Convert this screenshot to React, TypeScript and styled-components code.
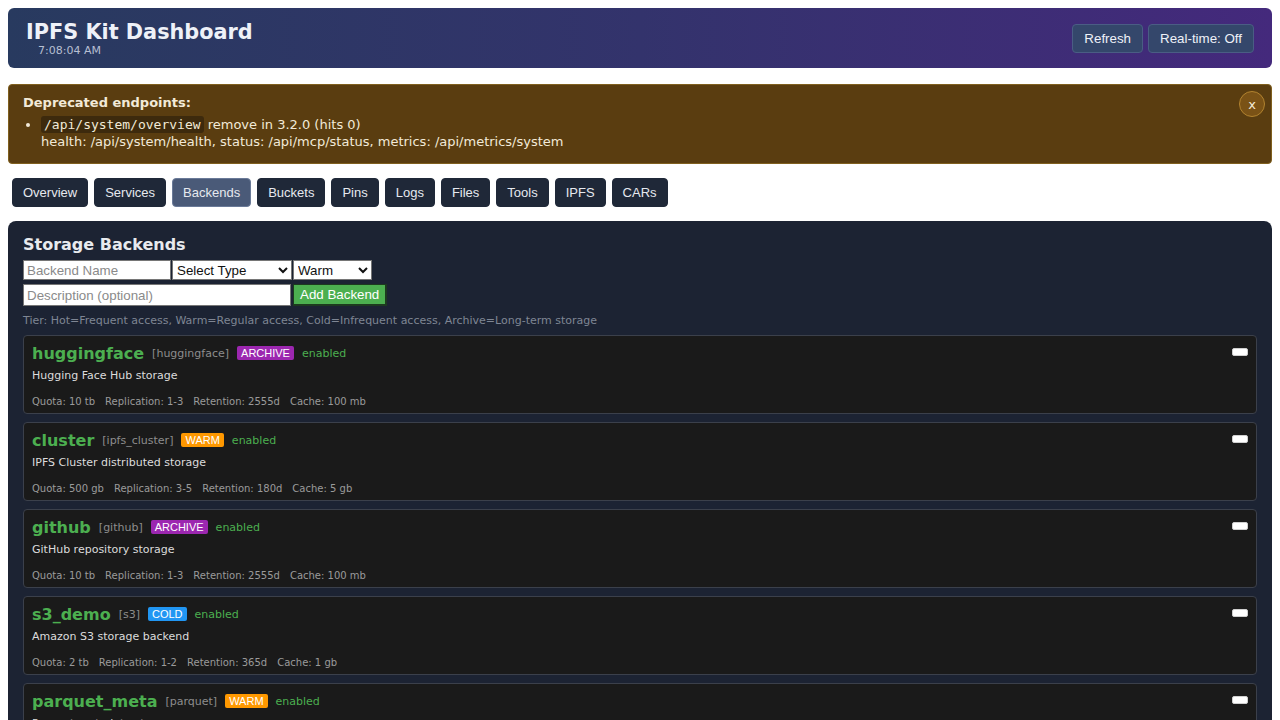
import React, { useState } from 'react';
import styled, { createGlobalStyle } from 'styled-components';

const GlobalStyle = createGlobalStyle`
  body {
    margin: 8px;
    background: #ffffff;
    font-family: "DejaVu Sans", sans-serif;
  }
`;

const Header = styled.header`
  display: flex;
  align-items: center;
  justify-content: space-between;
  height: 60px;
  box-sizing: border-box;
  padding: 0 18px;
  border-radius: 6px;
  background: linear-gradient(90deg, #283a5f 0%, #33336c 50%, #44297c 100%);
  color: #eef1f8;
`;

const TitleBlock = styled.div`
  display: flex;
  flex-direction: column;
`;

const Title = styled.h1`
  margin: 0;
  font-size: 20.8px;
  line-height: 24px;
  font-weight: bold;
`;

const Clock = styled.span`
  margin-left: 12px;
  font-size: 11px;
  line-height: 13px;
  color: #b7bfd2;
`;

const HeaderActions = styled.div`
  display: flex;
  gap: 5px;
`;

const HeaderButton = styled.button`
  font-family: "Liberation Sans", Arial, sans-serif;
  font-size: 13.33px;
  height: 29px;
  padding: 0 11px;
  background: #34476b;
  color: #eef1f8;
  border: 1px solid #4a5d84;
  border-radius: 4px;
`;

const Banner = styled.div`
  position: relative;
  margin-top: 16px;
  padding: 10px 14px 13px;
  background: #5a3d10;
  border: 1px solid #80601f;
  border-radius: 4px;
  color: #f2ead8;
  font-size: 13px;
`;

const BannerTitle = styled.div`
  font-weight: bold;
  line-height: 16px;
`;

const BannerList = styled.ul`
  margin: 5px 0 0;
  padding-left: 18px;
  line-height: 17px;
`;

const Code = styled.code`
  font-family: "DejaVu Sans Mono", monospace;
  font-size: 13px;
  background: #3d2a0d;
  padding: 1px 3px;
  border-radius: 3px;
`;

const CloseButton = styled.button`
  position: absolute;
  top: 6px;
  right: 6px;
  width: 26px;
  height: 26px;
  border-radius: 50%;
  background: #7a5216;
  border: 1px solid #b2832f;
  color: #f6ecd6;
  font-family: "DejaVu Sans", sans-serif;
  font-size: 13px;
  padding: 0;
  display: flex;
  align-items: center;
  justify-content: center;
`;

const Tabs = styled.nav`
  display: flex;
  gap: 6px;
  margin: 14px 0 0 4px;
`;

const Tab = styled.button<{ $active?: boolean }>`
  font-family: "Liberation Sans", Arial, sans-serif;
  font-size: 13px;
  height: 29px;
  padding: 0 10px;
  border-radius: 4px;
  color: #e6e9ef;
  background: ${p => (p.$active ? '#4a5a78' : '#1f2838')};
  border: 1px solid ${p => (p.$active ? '#6a7a98' : '#1f2838')};
`;

const Panel = styled.section`
  margin-top: 14px;
  padding: 14px 15px 20px;
  background: #1c2333;
  border-radius: 8px;
  color: #e8eaee;
`;

const PanelTitle = styled.h2`
  margin: 0 0 5px;
  font-size: 16px;
  line-height: 20px;
  font-weight: bold;
`;

const FormRow = styled.div`
  display: flex;
  gap: 1px;
  margin-bottom: 4px;
`;

const TextInput = styled.input<{ $w: number; $h?: number }>`
  width: ${p => p.$w}px;
  height: ${p => p.$h ?? 20}px;
  box-sizing: border-box;
  font-family: "Liberation Sans", Arial, sans-serif;
  font-size: 13.33px;
  padding: 0 3px;
  border: 1px solid #767676;
  background: #fff;
  color: #111;
  &::placeholder {
    color: #8a8a8a;
  }
`;

const Select = styled.select<{ $w: number }>`
  width: ${p => p.$w}px;
  height: 20px;
  box-sizing: border-box;
  font-family: "Liberation Sans", Arial, sans-serif;
  font-size: 13.33px;
  border: 1px solid #767676;
  background: #fff;
  color: #111;
  border-radius: 0;
  padding: 0;
`;

const AddButton = styled.button`
  height: 22px;
  padding: 0 6px;
  margin-left: 1px;
  font-family: "Liberation Sans", Arial, sans-serif;
  font-size: 13.33px;
  background: #4caf50;
  color: #fff;
  border: 1px solid #1d3a1f;
  border-right-width: 2px;
  border-bottom-width: 2px;
`;

const Hint = styled.div`
  margin-top: 8px;
  font-size: 11px;
  line-height: 14px;
  color: #7f8694;
`;

const CardList = styled.div`
  display: flex;
  flex-direction: column;
  gap: 8px;
  margin-top: 7px;
`;

const Card = styled.div`
  padding: 7px 8px 4px 8px;
  background: #1a1a1a;
  border: 1px solid #3b404b;
  border-radius: 4px;
`;

const CardTop = styled.div`
  display: flex;
  justify-content: space-between;
  align-items: center;
`;

const NameRow = styled.div`
  display: flex;
  align-items: center;
  gap: 8px;
  height: 20px;
`;

const Name = styled.span`
  font-size: 16px;
  font-weight: bold;
  color: #4caf50;
`;

const TypeTag = styled.span`
  font-size: 11px;
  color: #8d8d8d;
`;

const Badge = styled.span<{ $bg: string }>`
  font-family: "Liberation Sans", Arial, sans-serif;
  font-size: 11px;
  line-height: 14px;
  padding: 0 4px;
  border-radius: 2px;
  color: #fff;
  background: ${p => p.$bg};
`;

const Status = styled.span`
  font-size: 11px;
  color: #4caf50;
`;

const ToggleButton = styled.button`
  width: 16px;
  height: 8px;
  padding: 0;
  margin-top: -2px;
  background: #ffffff;
  border: 1px solid #cfcfcf;
  border-radius: 2px;
`;

const Description = styled.div`
  margin-top: 6px;
  font-size: 11px;
  line-height: 14px;
  color: #dcdcdc;
`;

const Meta = styled.div`
  display: flex;
  gap: 10px;
  margin-top: 12px;
  font-size: 10px;
  line-height: 14px;
  color: #9a9a9a;
`;

interface Backend {
  name: string;
  type: string;
  tier: 'ARCHIVE' | 'WARM' | 'COLD' | 'HOT';
  description: string;
  quota: string;
  replication: string;
  retention: string;
  cache: string;
}

const tierColors: Record<Backend['tier'], string> = {
  ARCHIVE: '#9c27b0',
  WARM: '#ff9800',
  COLD: '#2196f3',
  HOT: '#f44336',
};

const backends: Backend[] = [
  { name: 'huggingface', type: 'huggingface', tier: 'ARCHIVE', description: 'Hugging Face Hub storage', quota: '10 tb', replication: '1-3', retention: '2555d', cache: '100 mb' },
  { name: 'cluster', type: 'ipfs_cluster', tier: 'WARM', description: 'IPFS Cluster distributed storage', quota: '500 gb', replication: '3-5', retention: '180d', cache: '5 gb' },
  { name: 'github', type: 'github', tier: 'ARCHIVE', description: 'GitHub repository storage', quota: '10 tb', replication: '1-3', retention: '2555d', cache: '100 mb' },
  { name: 's3_demo', type: 's3', tier: 'COLD', description: 'Amazon S3 storage backend', quota: '2 tb', replication: '1-2', retention: '365d', cache: '1 gb' },
  { name: 'parquet_meta', type: 'parquet', tier: 'WARM', description: 'Parquet metadata storage', quota: '100 gb', replication: '2-3', retention: '90d', cache: '2 gb' },
];

const tabs = ['Overview', 'Services', 'Backends', 'Buckets', 'Pins', 'Logs', 'Files', 'Tools', 'IPFS', 'CARs'];

const App: React.FC = () => {
  const [active, setActive] = useState('Backends');
  const [showBanner, setShowBanner] = useState(true);

  return (
    <>
      <GlobalStyle />
      <Header>
        <TitleBlock>
          <Title>IPFS Kit Dashboard</Title>
          <Clock>7:08:04 AM</Clock>
        </TitleBlock>
        <HeaderActions>
          <HeaderButton>Refresh</HeaderButton>
          <HeaderButton>Real-time: Off</HeaderButton>
        </HeaderActions>
      </Header>

      {showBanner && (
        <Banner>
          <BannerTitle>Deprecated endpoints:</BannerTitle>
          <BannerList>
            <li>
              <Code>/api/system/overview</Code> remove in 3.2.0 (hits 0)
              <br />
              health: /api/system/health, status: /api/mcp/status, metrics: /api/metrics/system
            </li>
          </BannerList>
          <CloseButton onClick={() => setShowBanner(false)}>x</CloseButton>
        </Banner>
      )}

      <Tabs>
        {tabs.map(t => (
          <Tab key={t} $active={t === active} onClick={() => setActive(t)}>
            {t}
          </Tab>
        ))}
      </Tabs>

      <Panel>
        <PanelTitle>Storage Backends</PanelTitle>
        <FormRow>
          <TextInput $w={148} placeholder="Backend Name" />
          <Select $w={120} defaultValue="">
            <option value="">Select Type</option>
            <option value="s3">s3</option>
            <option value="ipfs_cluster">ipfs_cluster</option>
          </Select>
          <Select $w={79} defaultValue="warm">
            <option value="hot">Hot</option>
            <option value="warm">Warm</option>
            <option value="cold">Cold</option>
            <option value="archive">Archive</option>
          </Select>
        </FormRow>
        <FormRow>
          <TextInput $w={268} $h={22} placeholder="Description (optional)" />
          <AddButton>Add Backend</AddButton>
        </FormRow>
        <Hint>Tier: Hot=Frequent access, Warm=Regular access, Cold=Infrequent access, Archive=Long-term storage</Hint>

        <CardList>
          {backends.map(b => (
            <Card key={b.name}>
              <CardTop>
                <NameRow>
                  <Name>{b.name}</Name>
                  <TypeTag>[{b.type}]</TypeTag>
                  <Badge $bg={tierColors[b.tier]}>{b.tier}</Badge>
                  <Status>enabled</Status>
                </NameRow>
                <ToggleButton />
              </CardTop>
              <Description>{b.description}</Description>
              <Meta>
                <span>Quota: {b.quota}</span>
                <span>Replication: {b.replication}</span>
                <span>Retention: {b.retention}</span>
                <span>Cache: {b.cache}</span>
              </Meta>
            </Card>
          ))}
        </CardList>
      </Panel>
    </>
  );
};

export default App;
